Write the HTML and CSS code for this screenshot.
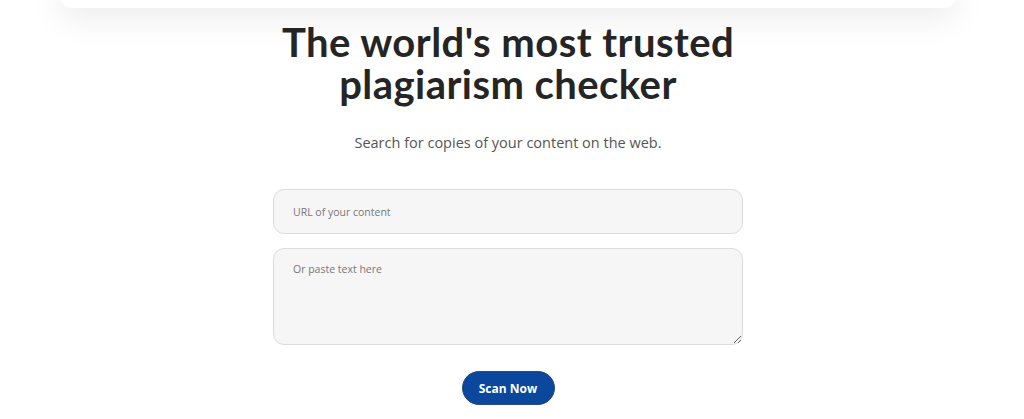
FILE: index.html
```html
<!DOCTYPE html>
<html lang="en">
<head>
<meta charset="utf-8">
<title>Plagiarism checker</title>
<link rel="stylesheet" href="styles.css">
</head>
<body>
<div class="page">
  <header class="topbar"></header>
  <main class="hero">
    <h1 class="title">The world's most trusted<br>plagiarism checker</h1>
    <p class="subtitle">Search for copies of your content on the web.</p>
    <form class="scan-form">
      <input class="field url-field" type="text" placeholder="URL of your content">
      <textarea class="field text-field" placeholder="Or paste text here"></textarea>
      <button class="scan-btn" type="button">Scan Now</button>
    </form>
  </main>
</div>
</body>
</html>
```

FILE: styles.css
```css
html, body {
  margin: 0;
  padding: 0;
  background: #fff;
  overflow: hidden;
}

body {
  font-family: "Open Sans", "Liberation Sans", sans-serif;
}

.page {
  width: 1016px;
}

.topbar {
  height: 48px;
  margin: -40px 60px 0;
  background: #fff;
  border-radius: 12px;
  box-shadow: 0 12px 32px rgba(0, 0, 0, 0.07);
}

.hero {
  display: flex;
  flex-direction: column;
  align-items: center;
}

.title {
  margin: 13px 0 0;
  font-family: "Lato", "Liberation Sans", sans-serif;
  font-weight: 700;
  font-size: 40px;
  line-height: 42px;
  letter-spacing: 0.45px;
  color: #252525;
  text-align: center;
}

.subtitle {
  margin: 28px 0 0;
  font-size: 14.5px;
  color: #555;
}

.scan-form {
  display: flex;
  flex-direction: column;
  align-items: center;
  width: 470px;
  margin-top: 37px;
}

.field {
  box-sizing: border-box;
  width: 100%;
  background: #f6f6f6;
  border: 1px solid #dcdcdc;
  border-radius: 11px;
  font-family: "Open Sans", "Liberation Sans", sans-serif;
  font-size: 10.5px;
  color: #333;
  outline: none;
  margin: 0;
}

.field::placeholder {
  color: #767676;
}

.url-field {
  height: 45px;
  padding: 0 19px;
}

.text-field {
  height: 97px;
  margin-top: 14px;
  padding: 13px 19px;
  resize: vertical;
  display: block;
}

.scan-btn {
  margin-top: 26px;
  width: 93px;
  height: 34px;
  background: #0a479d;
  border: 1.5px solid #2a4a7a;
  border-radius: 17px;
  color: #fff;
  font-family: "Open Sans", "Liberation Sans", sans-serif;
  font-weight: 700;
  font-size: 12px;
  padding: 0;
}
```
